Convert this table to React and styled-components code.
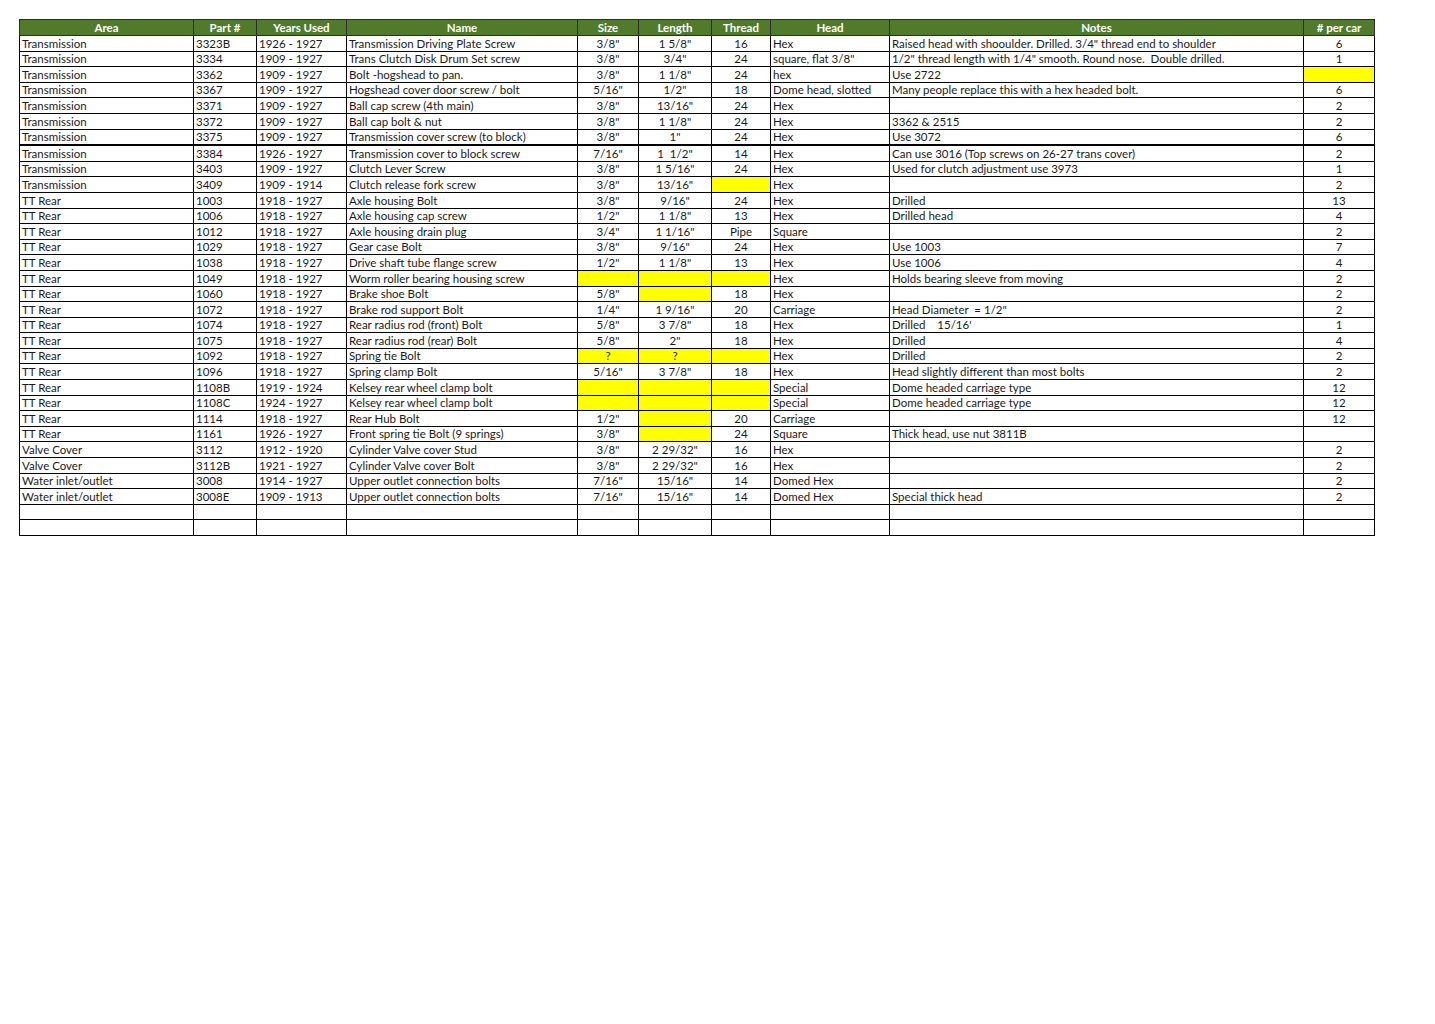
import React from 'react';
import styled, { createGlobalStyle } from 'styled-components';

const GlobalStyle = createGlobalStyle`
  html, body {
    margin: 0;
    padding: 0;
    background: #ffffff;
  }
  body {
    font-family: Lato, "Open Sans", sans-serif;
  }
`;

const columns = [
  { key: 'area', title: 'Area', width: 174, align: 'left' },
  { key: 'part', title: 'Part #', width: 63, align: 'left' },
  { key: 'years', title: 'Years Used', width: 90, align: 'left' },
  { key: 'name', title: 'Name', width: 231, align: 'left' },
  { key: 'size', title: 'Size', width: 61, align: 'center' },
  { key: 'length', title: 'Length', width: 73, align: 'center' },
  { key: 'thread', title: 'Thread', width: 59, align: 'center' },
  { key: 'head', title: 'Head', width: 119, align: 'left' },
  { key: 'notes', title: 'Notes', width: 414, align: 'left' },
  { key: 'perCar', title: '# per car', width: 71, align: 'center' },
];

// 11th entry: keys of yellow highlighted cells, 12th: thick line below
const rows = [
  ['Transmission', '3323B', '1926 - 1927', 'Transmission Driving Plate Screw', '3/8"', '1 5/8"', '16', 'Hex', 'Raised head with shooulder. Drilled. 3/4" thread end to shoulder', '6'],
  ['Transmission', '3334', '1909 - 1927', 'Trans Clutch Disk Drum Set screw', '3/8"', '3/4"', '24', 'square, flat 3/8"', '1/2" thread length with 1/4" smooth. Round nose.  Double drilled.', '1'],
  ['Transmission', '3362', '1909 - 1927', 'Bolt -hogshead to pan.', '3/8"', '1 1/8"', '24', 'hex', 'Use 2722', '', ['perCar']],
  ['Transmission', '3367', '1909 - 1927', 'Hogshead cover door screw / bolt', '5/16"', '1/2"', '18', 'Dome head, slotted', 'Many people replace this with a hex headed bolt.', '6'],
  ['Transmission', '3371', '1909 - 1927', 'Ball cap screw (4th main)', '3/8"', '13/16"', '24', 'Hex', '', '2'],
  ['Transmission', '3372', '1909 - 1927', 'Ball cap bolt & nut', '3/8"', '1 1/8"', '24', 'Hex', '3362 & 2515', '2'],
  ['Transmission', '3375', '1909 - 1927', 'Transmission cover screw (to block)', '3/8"', '1"', '24', 'Hex', 'Use 3072', '6', [], true],
  ['Transmission', '3384', '1926 - 1927', 'Transmission cover to block screw', '7/16"', '1  1/2"', '14', 'Hex', 'Can use 3016 (Top screws on 26-27 trans cover)', '2'],
  ['Transmission', '3403', '1909 - 1927', 'Clutch Lever Screw', '3/8"', '1 5/16"', '24', 'Hex', 'Used for clutch adjustment use 3973', '1'],
  ['Transmission', '3409', '1909 - 1914', 'Clutch release fork screw', '3/8"', '13/16"', '', 'Hex', '', '2', ['thread']],
  ['TT Rear', '1003', '1918 - 1927', 'Axle housing Bolt', '3/8"', '9/16"', '24', 'Hex', 'Drilled', '13'],
  ['TT Rear', '1006', '1918 - 1927', 'Axle housing cap screw', '1/2"', '1 1/8"', '13', 'Hex', 'Drilled head', '4'],
  ['TT Rear', '1012', '1918 - 1927', 'Axle housing drain plug', '3/4"', '1 1/16"', 'Pipe', 'Square', '', '2'],
  ['TT Rear', '1029', '1918 - 1927', 'Gear case Bolt', '3/8"', '9/16"', '24', 'Hex', 'Use 1003', '7'],
  ['TT Rear', '1038', '1918 - 1927', 'Drive shaft tube flange screw', '1/2"', '1 1/8"', '13', 'Hex', 'Use 1006', '4'],
  ['TT Rear', '1049', '1918 - 1927', 'Worm roller bearing housing screw', '', '', '', 'Hex', 'Holds bearing sleeve from moving', '2', ['size', 'length', 'thread']],
  ['TT Rear', '1060', '1918 - 1927', 'Brake shoe Bolt', '5/8"', '', '18', 'Hex', '', '2', ['length']],
  ['TT Rear', '1072', '1918 - 1927', 'Brake rod support Bolt', '1/4"', '1 9/16"', '20', 'Carriage', 'Head Diameter  = 1/2"', '2'],
  ['TT Rear', '1074', '1918 - 1927', 'Rear radius rod (front) Bolt', '5/8"', '3 7/8"', '18', 'Hex', "Drilled    15/16'", '1'],
  ['TT Rear', '1075', '1918 - 1927', 'Rear radius rod (rear) Bolt', '5/8"', '2"', '18', 'Hex', 'Drilled', '4'],
  ['TT Rear', '1092', '1918 - 1927', 'Spring tie Bolt', '?', '?', '', 'Hex', 'Drilled', '2', ['size', 'length', 'thread']],
  ['TT Rear', '1096', '1918 - 1927', 'Spring clamp Bolt', '5/16"', '3 7/8"', '18', 'Hex', 'Head slightly different than most bolts', '2'],
  ['TT Rear', '1108B', '1919 - 1924', 'Kelsey rear wheel clamp bolt', '', '', '', 'Special', 'Dome headed carriage type', '12', ['size', 'length', 'thread']],
  ['TT Rear', '1108C', '1924 - 1927', 'Kelsey rear wheel clamp bolt', '', '', '', 'Special', 'Dome headed carriage type', '12', ['size', 'length', 'thread']],
  ['TT Rear', '1114', '1918 - 1927', 'Rear Hub Bolt', '1/2"', '', '20', 'Carriage', '', '12', ['length']],
  ['TT Rear', '1161', '1926 - 1927', 'Front spring tie Bolt (9 springs)', '3/8"', '', '24', 'Square', 'Thick head, use nut 3811B', '', ['length']],
  ['Valve Cover', '3112', '1912 - 1920', 'Cylinder Valve cover Stud', '3/8"', '2 29/32"', '16', 'Hex', '', '2'],
  ['Valve Cover', '3112B', '1921 - 1927', 'Cylinder Valve cover Bolt', '3/8"', '2 29/32"', '16', 'Hex', '', '2'],
  ['Water inlet/outlet', '3008', '1914 - 1927', 'Upper outlet connection bolts', '7/16"', '15/16"', '14', 'Domed Hex', '', '2'],
  ['Water inlet/outlet', '3008E', '1909 - 1913', 'Upper outlet connection bolts', '7/16"', '15/16"', '14', 'Domed Hex', 'Special thick head', '2'],
  ['', '', '', '', '', '', '', '', '', ''],
  ['', '', '', '', '', '', '', '', '', ''],
];

const Page = styled.div`
  padding: 19px 0 0 19px;
  width: 1435px;
  height: 1024px;
  box-sizing: border-box;
`;

const Sheet = styled.table`
  border-collapse: collapse;
  table-layout: fixed;
  width: 1355px;
  font-size: 11.5px;
  color: #1a1a1a;
  border: 1px solid #000;
`;

const HeadCell = styled.th`
  height: 15px;
  padding: 0 2px;
  background: #4f7b2b;
  color: #ffffff;
  font-weight: 700;
  font-size: 11.5px;
  line-height: 15px;
  text-align: center;
  border: 1px solid #2c2c2c;
  white-space: nowrap;
  overflow: hidden;
`;

const Row = styled.tr`
  border-bottom: ${({ $thick }) => ($thick ? '2px solid #000' : '1px solid #000')};
`;

const Cell = styled.td`
  padding: 0 2px;
  line-height: 14px;
  height: 14.6px;
  text-align: ${({ $align }) => $align};
  background: ${({ $yellow }) => ($yellow ? '#ffff00' : '#ffffff')};
  border-left: 1px solid ${({ $grey }) => ($grey ? '#777' : '#000')};
  border-right: 1px solid #000;
  white-space: pre;
  overflow: hidden;
  vertical-align: bottom;
`;

export default function App() {
  return (
    <Page>
      <GlobalStyle />
      <Sheet>
        <colgroup>
          {columns.map(c => (
            <col key={c.key} style={{ width: c.width }} />
          ))}
        </colgroup>
        <thead>
          <tr>
            {columns.map(c => (
              <HeadCell key={c.key}>{c.title}</HeadCell>
            ))}
          </tr>
        </thead>
        <tbody>
          {rows.map((r, i) => {
            const yellow = r[10] || [];
            return (
              <Row key={i} $thick={r[11]}>
                {columns.map((c, j) => (
                  <Cell
                    key={c.key}
                    $align={c.align}
                    $yellow={yellow.includes(c.key)}
                    $grey={c.key === 'perCar'}
                  >
                    {r[j]}
                  </Cell>
                ))}
              </Row>
            );
          })}
        </tbody>
      </Sheet>
    </Page>
  );
}
